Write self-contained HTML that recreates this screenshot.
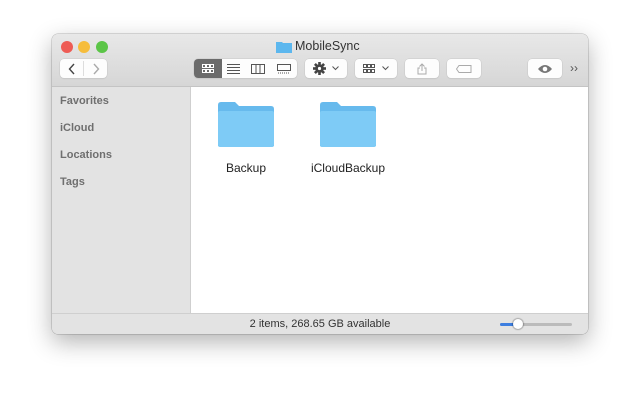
<!DOCTYPE html><html><head><style>
body{margin:0;width:640px;height:404px;background:#fff;position:relative;overflow:hidden;font-family:"Liberation Sans",sans-serif}
.win{position:absolute;left:52px;top:34px;width:536px;height:300px;border-radius:6px;background:#ececec;box-shadow:0 8px 24px rgba(0,0,0,.3),0 0 0 .5px rgba(0,0,0,.25);overflow:hidden}
.tb{position:absolute;left:0;top:0;width:536px;height:52px;background:linear-gradient(#e8e8e8,#d6d6d6);border-bottom:1px solid #c4c4c4}
.dot{position:absolute;top:7px;width:12px;height:12px;border-radius:50%}
.btn{position:absolute;top:25px;height:19px;background:#fdfdfd;border-radius:4px;box-shadow:0 0 0 .5px #c8c8c8,0 1px 1px rgba(0,0,0,.08);display:flex;align-items:center;justify-content:center;color:#555;font-size:11px}
.side{position:absolute;left:0;top:53px;width:138px;height:226px;background:#e3e3e3;border-right:1px solid #cfcfcf}
.side div{position:absolute;left:8px;font-size:11px;color:#6f6f6f;font-weight:bold}
.main{position:absolute;left:139px;top:53px;width:397px;height:226px;background:#fff}
.st{position:absolute;left:0;top:279px;width:536px;height:21px;background:#e3e3e3;border-top:1px solid #cfcfcf;font-size:11px;color:#333;text-align:center;line-height:21px}
.lbl{position:absolute;font-size:12px;color:#222;text-align:center;width:100px}
</style></head><body>
<div class="win">
<div class="tb">
<div class="dot" style="left:9px;background:#ee5c55"></div>
<div class="dot" style="left:26px;background:#f6bd3c"></div>
<div class="dot" style="left:44px;background:#5bc547"></div>
<svg style="position:absolute;left:224px;top:6px" width="16" height="13"><path d="M0 2h6l1 1h9v10H0z" fill="#5cb7ee"/></svg>
<div style="position:absolute;left:243px;top:5px;font-size:12.5px;color:#333">MobileSync</div>
<div class="btn" style="left:8px;width:47px"><span style="position:absolute;left:23px;top:2px;width:1px;height:15px;background:#ddd"></span>
<svg style="position:absolute;left:8px;top:4px" width="8" height="12"><path d="M6 1L1.5 6L6 11" fill="none" stroke="#444" stroke-width="1.4"/></svg>
<svg style="position:absolute;left:32px;top:4px" width="8" height="12"><path d="M2 1L6.5 6L2 11" fill="none" stroke="#aaa" stroke-width="1.4"/></svg></div>
<div class="btn" style="left:142px;width:103px;justify-content:space-around">
<span style="position:absolute;left:0;top:0;width:28px;height:19px;background:#6b6b6b;border-radius:4px 0 0 4px"></span>
<svg style="position:absolute;left:8px;top:5px" width="12" height="9"><g fill="none" stroke="#fff"><rect x=".5" y=".5" width="3" height="3"/><rect x="4.5" y=".5" width="3" height="3"/><rect x="8.5" y=".5" width="3" height="3"/><rect x=".5" y="5.5" width="3" height="3"/><rect x="4.5" y="5.5" width="3" height="3"/><rect x="8.5" y="5.5" width="3" height="3"/></g></svg>
<svg style="position:absolute;left:33px;top:5px" width="13" height="10" stroke="#555"><path d="M0 .5h13M0 3.5h13M0 6.5h13M0 9.5h13"/></svg>
<svg style="position:absolute;left:57px;top:5px" width="14" height="10"><rect x=".5" y=".5" width="13" height="9" fill="none" stroke="#555"/><path d="M5 0v10M9 0v10" stroke="#555"/></svg>
<svg style="position:absolute;left:83px;top:5px" width="14" height="10"><rect x=".5" y=".5" width="13" height="6" fill="none" stroke="#555"/><path d="M1 9h12" stroke="#555" stroke-dasharray="1 1"/></svg>
</div>
<div class="btn" style="left:253px;width:42px"><svg width="13" height="13" viewBox="-6.5 -6.5 13 13"><g fill="#444"><circle r="4.3"/><rect x="-1.3" y="-6.5" width="2.6" height="13"/><rect x="-6.5" y="-1.3" width="13" height="2.6"/><rect x="-1.3" y="-6.5" width="2.6" height="13" transform="rotate(45)"/><rect x="-1.3" y="-6.5" width="2.6" height="13" transform="rotate(-45)"/></g><circle r="1.6" fill="#fff"/></svg>&nbsp;&nbsp;<svg width="7" height="5"><path d="M.5 .5L3.5 3.5L6.5 .5" fill="none" stroke="#555"/></svg></div>
<div class="btn" style="left:303px;width:42px"><svg width="12" height="9"><g fill="none" stroke="#555"><rect x=".5" y=".5" width="3" height="3"/><rect x="4.5" y=".5" width="3" height="3"/><rect x="8.5" y=".5" width="3" height="3"/><rect x=".5" y="5.5" width="3" height="3"/><rect x="4.5" y="5.5" width="3" height="3"/><rect x="8.5" y="5.5" width="3" height="3"/></g></svg>&nbsp;&nbsp;<svg width="7" height="5"><path d="M.5 .5L3.5 3.5L6.5 .5" fill="none" stroke="#555"/></svg></div>
<div class="btn" style="left:353px;width:34px"><svg width="10" height="12"><path d="M5 1v7M2.5 3.5L5 1l2.5 2.5M3 5H1v6h8V5H7" fill="none" stroke="#aaa"/></svg></div>
<div class="btn" style="left:395px;width:34px"><svg width="16" height="8"><path d="M3 .5h12v7H3L.5 4z" fill="none" stroke="#aaa"/></svg></div>
<div class="btn" style="left:476px;width:34px"><svg width="16" height="10"><path d="M1 5Q8-3 15 5Q8 13 1 5z" fill="#777"/><circle cx="8" cy="5" r="2.3" fill="#fff"/></svg></div>
<div style="position:absolute;left:518px;top:27px;font-size:12px;color:#555">››</div>
</div>
<div class="side"><div style="top:8px">Favorites</div><div style="top:35px">iCloud</div><div style="top:62px">Locations</div><div style="top:89px">Tags</div></div>
<div class="main">
<svg style="position:absolute;left:27px;top:15px" width="56" height="45"><path d="M0 3Q0 0 3 0H17L21 4H53Q56 4 56 7V44H0z" fill="#67baed"/><rect x="0" y="9" width="56" height="36" rx="2" fill="#7ecbf6"/></svg>
<svg style="position:absolute;left:129px;top:15px" width="56" height="45"><path d="M0 3Q0 0 3 0H17L21 4H53Q56 4 56 7V44H0z" fill="#67baed"/><rect x="0" y="9" width="56" height="36" rx="2" fill="#7ecbf6"/></svg>
<div class="lbl" style="left:5px;top:74px">Backup</div>
<div class="lbl" style="left:107px;top:74px">iCloudBackup</div>
</div>
<div class="st">2 items, 268.65 GB available
<div style="position:absolute;left:448px;top:9px;width:72px;height:3px;background:#bbb;border-radius:2px"></div>
<div style="position:absolute;left:448px;top:9px;width:18px;height:3px;background:#3d7ee0;border-radius:2px"></div>
<div style="position:absolute;left:461px;top:5px;width:10px;height:10px;border-radius:50%;background:#fff;box-shadow:0 0 1px 1px rgba(0,0,0,.25)"></div>
</div>
</div>
</body></html>
